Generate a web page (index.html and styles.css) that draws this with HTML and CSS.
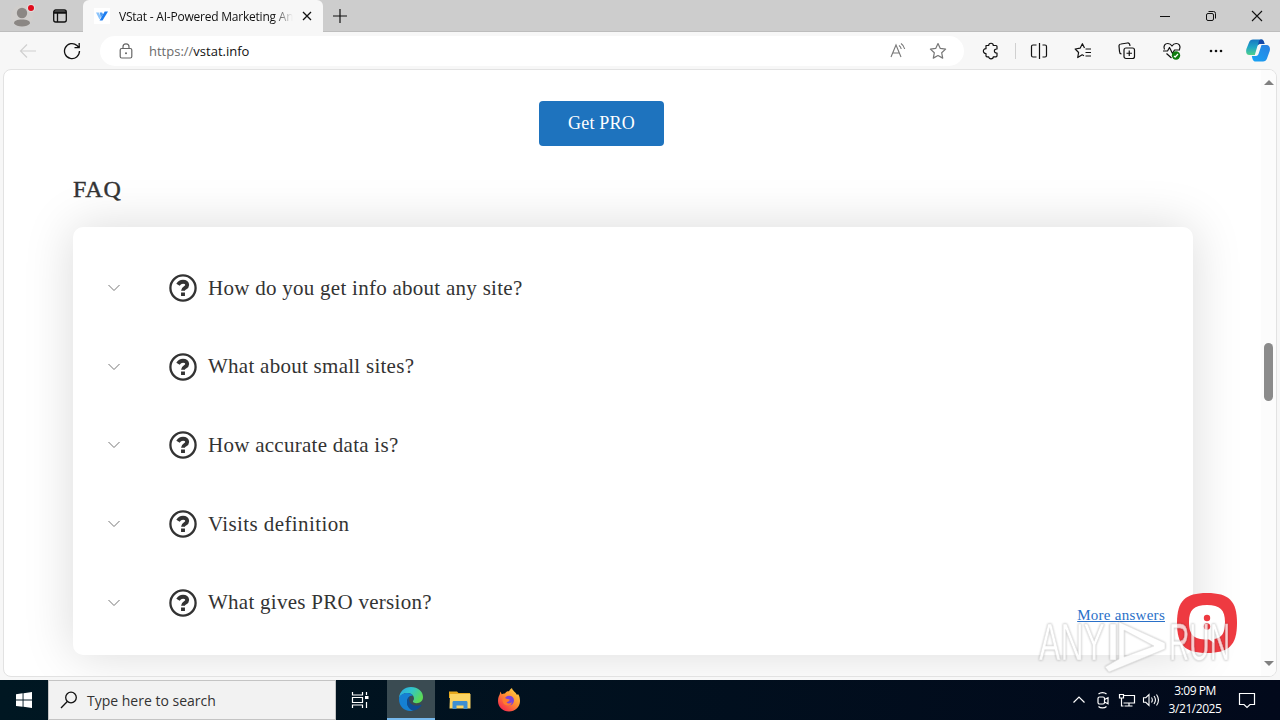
FILE: index.html
```html
<!DOCTYPE html>
<html lang="en">
<head>
    <meta charset="UTF-8">
    <meta name="viewport" content="width=device-width, initial-scale=1.0">
    <title>VStat - AI-Powered Marketing Analytics</title>
    <link rel="stylesheet" href="styles.css">
</head>
<body>
    <div class="screen">
        <!-- Tabs -->
        <div class="tabbar">
            <div class="profile">
                <svg width="32" height="32" viewBox="0 0 32 32">
                    <circle cx="16" cy="16" r="11" fill="#d0cecc"/>
                    <circle cx="16" cy="13" r="5.2" fill="#8b8784"/>
                    <path d="M8 23.5c0-3 3-4 8-4s8 1 8 4c-1.500 2-4.500 3-8 3s-6.500-1-8-3z" fill="#8b8784"/>
                    <circle cx="25" cy="8" r="4" fill="#e3dcdc"/>
                    <circle cx="25" cy="8" r="3" fill="#e00b1c"/>
                </svg>
            </div>
            <div class="tab-actions">
                <svg width="16" height="16" viewBox="0 0 16 16" fill="none" stroke="#111" stroke-width="1.300">
                    <rect x="1.700" y="2" width="12.600" height="12" rx="2"/>
                    <path d="M2 4h12M2 5h12M5.500 5v9"/>
                </svg>
            </div>
            <div class="tab">
                <div class="favicon">
                    <svg width="12" height="10" viewBox="0 0 12 10">
                        <path d="M0 1.500h2.800l2 4.500-1.300 2.500z" fill="#8cc4fb"/>
                        <path d="M3.600 1.500h2.500l1 2-2.200 3z" fill="#4c9cf5"/>
                        <path d="M8.700.5H12L6.500 9.500H3.600z" fill="#1d7df0"/>
                    </svg>
                </div>
                <div class="tab-title">VStat - AI-Powered Marketing An</div>
                <svg class="tab-close" width="10" height="10" viewBox="0 0 10 10" stroke="#111" stroke-width="1.300"><path d="M1 1l8 8M9 1L1 9"/></svg>
            </div>
            <svg class="new-tab" width="14" height="14" viewBox="0 0 14 14" stroke="#111" stroke-width="1.200"><path d="M7 0v14M0 7h14"/></svg>
            <div class="window-buttons">
                <div><svg width="12" height="12" viewBox="0 0 12 12" stroke="#111"><path d="M1 6.500h10"/></svg></div>
                <div><svg width="12" height="12" viewBox="0 0 12 12" fill="none" stroke="#111"><rect x="1.500" y="3.500" width="7" height="7" rx="1.500"/><path d="M3.500 1.500h5a2 2 0 0 1 2 2v5"/></svg></div>
                <div><svg width="12" height="12" viewBox="0 0 12 12" stroke="#111" stroke-width="1.100"><path d="M1 1l10 10M11 1L1 11"/></svg></div>
            </div>
        </div>

        <!-- Address bar -->
        <div class="toolbar">
            <div class="nav-button">
                <svg width="18" height="16" viewBox="0 0 18 16" fill="none" stroke="#d0d0d0" stroke-width="1.200"><path d="M17 8H1.500M8 1.500L1.500 8 8 14.500"/></svg>
            </div>
            <div class="nav-button">
                <svg width="18" height="18" viewBox="0 0 18 18" fill="none" stroke="#111" stroke-width="1.300"><path d="M16.500 9A7.500 7.500 0 1 1 14 3.500L16 5.500M16.200 1v4.700h-4.700"/></svg>
            </div>
            <div class="address">
                <svg class="lock" width="14" height="16" viewBox="0 0 14 16" fill="none" stroke="#666" stroke-width="1.200">
                    <rect x="1.200" y="5.500" width="11.600" height="9.500" rx="1.500"/>
                    <path d="M4 5.500V3.800a3 3 0 0 1 6 0v1.700"/>
                    <circle cx="7" cy="10.200" r="1" fill="#666" stroke="none"/>
                </svg>
                <div class="url"><span>https://</span>vstat.info</div>
                <div class="address-icon">
                    <svg width="18" height="18" viewBox="0 0 18 18" fill="none" stroke="#777" stroke-width="1.100">
                        <path d="M2 15L7 3l5 12M3.700 11h6.600M10 3.500c1.200.8 2 2 2.200 3.500M12 1.500c2 1.300 3.200 3.200 3.700 5.500"/>
                    </svg>
                </div>
                <div class="address-icon">
                    <svg width="18" height="18" viewBox="0 0 18 18" fill="none" stroke="#777" stroke-width="1.200" stroke-linejoin="round">
                        <path d="M9 1.500l2.300 4.900 5.300.7-3.900 3.700 1 5.300L9 13.500l-4.700 2.600 1-5.300L1.400 7.100l5.300-.7z"/>
                    </svg>
                </div>
            </div>
            <div class="tool tool-ext">
                <svg width="18" height="18" viewBox="0 0 18 18" fill="none" stroke="#111" stroke-width="1.200" stroke-linejoin="round">
                    <path d="M4 3.500h2.700c0-3 4.600-3 4.600 0H14a1 1 0 0 1 1 1V7c-3.500-.3-3.500 4.300 0 4v2.800a1 1 0 0 1-1 1h-2.700c0 2.700-4.600 2.700-4.600 0H5a1 1 0 0 1-1-1V11.500C.5 11.500.5 6.700 4 6.700z"/>
                </svg>
            </div>
            <div class="separator"></div>
            <div class="tool">
                <svg width="18" height="18" viewBox="0 0 18 18" fill="none" stroke="#111" stroke-width="1.200">
                    <path d="M9.500 1v16M6.500 3H3a1.500 1.500 0 0 0-1.500 1.500v9A1.500 1.500 0 0 0 3 15h3.500M12.500 3H15a1.500 1.500 0 0 1 1.500 1.500v9A1.500 1.500 0 0 1 15 15h-2.500"/>
                </svg>
            </div>
            <div class="tool">
                <svg width="18" height="18" viewBox="0 0 18 18" fill="none" stroke="#111" stroke-width="1.200" stroke-linejoin="round">
                    <path d="M11.500 7H17M11.500 10.500H17M11.500 14H17M10 13.700l-1.800-.9-4.500 2.700.9-5L1.200 7l4.900-.8 2.300-4.500L10.500 6"/>
                </svg>
            </div>
            <div class="tool">
                <svg width="18" height="18" viewBox="0 0 18 18" fill="none" stroke="#111" stroke-width="1.200">
                    <rect x="6" y="6" width="10.500" height="10.500" rx="2"/>
                    <path d="M11.250 8.500v5.500M8.500 11.250H14M3.500 12A2.500 2.500 0 0 1 1.500 9.500L1 4a2 2 0 0 1 2-2l6.500-1a2 2 0 0 1 2.300 2l.2 1"/>
                </svg>
            </div>
            <div class="tool">
                <svg width="20" height="18" viewBox="0 0 20 18" fill="none" stroke="#111" stroke-width="1.200" stroke-linejoin="round">
                    <path d="M2.500 7.500C1 4 3 1.500 5.800 1.500c2 0 3.300 1 4.200 2.500.9-1.500 2.200-2.500 4.200-2.500C17 1.500 19 4 17.500 7.500M1 9h4.500l2-3.500 3 6 2-3.500H18M4.500 11.500L9.500 16"/>
                    <circle cx="14" cy="13.500" r="4.200" fill="#107c10" stroke="none"/>
                    <path d="M12 14l1.200 1 2.800-3" stroke="#fff"/>
                </svg>
            </div>
            <div class="tool">
                <svg width="16" height="4" viewBox="0 0 16 4" fill="#111"><circle cx="3" cy="2" r="1.300"/><circle cx="8" cy="2" r="1.300"/><circle cx="13" cy="2" r="1.300"/></svg>
            </div>
            <div class="tool tool-copilot">
                <svg width="24" height="23" viewBox="0 0 24 23">
                    <defs>
                        <linearGradient id="copilotLeft" x1="0" y1="0" x2="0" y2="1">
                            <stop offset="0" stop-color="#1677c2"/>
                            <stop offset=".5" stop-color="#20a6c6"/>
                            <stop offset="1" stop-color="#4fd08b"/>
                        </linearGradient>
                        <linearGradient id="copilotRight" x1="1" y1="0" x2="0" y2="1">
                            <stop offset="0" stop-color="#2b7fe0"/>
                            <stop offset="1" stop-color="#16a5f5"/>
                        </linearGradient>
                    </defs>
                    <path d="M7 .5h8.500c1.700 0 2.500 1.500 3 4.500H14c-1.500 0-2.200 1-2.700 2.500L8.800 16H3.500C.2 16-.3 13 .4 10L3 3.500C3.700 1.500 5 .5 7 .5z" fill="url(#copilotLeft)"/>
                    <path d="M15.500.5c1.700 0 2.300 1.500 3 4.500H14c-1 0-1.700.5-2.200 1.500L13 2c.4-1 1-1.500 2.500-1.500z" fill="#1448a8"/>
                    <path d="M17 22.500H9.500C7 22.500 6.500 20 5.800 17H10c1.500 0 2.200-1 2.700-2.500L15.500 6h5c3 0 4 3 3.200 6L21 19.500c-.7 2-2 3-4 3z" fill="url(#copilotRight)"/>
                </svg>
            </div>
        </div>

        <!-- Page -->
        <div class="viewport">
            <div class="page">
                <button class="pro-button">Get PRO</button>
                <h2 class="faq-title">FAQ</h2>
                <div class="faq">
                    <div class="faq-item">
                        <svg class="chevron" width="12" height="8" viewBox="0 0 12 8"><path d="M.5 1L6 6.500 11.500 1"/></svg>
                        <svg class="question" width="28" height="28" viewBox="0 0 28 28"><circle cx="14" cy="14" r="12.600"/><path d="M9 10.700C10.300 8.500 12 7.700 14 7.700c2.500 0 4.200 1.300 4.200 3.300 0 3.200-4.200 2.700-4.200 5.700M14 18.500v3.500"/></svg>
                        <span>How do you get info about any site?</span>
                    </div>
                    <div class="faq-item">
                        <svg class="chevron" width="12" height="8" viewBox="0 0 12 8"><path d="M.5 1L6 6.500 11.500 1"/></svg>
                        <svg class="question" width="28" height="28" viewBox="0 0 28 28"><circle cx="14" cy="14" r="12.600"/><path d="M9 10.700C10.300 8.500 12 7.700 14 7.700c2.500 0 4.200 1.300 4.200 3.300 0 3.200-4.200 2.700-4.200 5.700M14 18.500v3.500"/></svg>
                        <span>What about small sites?</span>
                    </div>
                    <div class="faq-item">
                        <svg class="chevron" width="12" height="8" viewBox="0 0 12 8"><path d="M.5 1L6 6.500 11.500 1"/></svg>
                        <svg class="question" width="28" height="28" viewBox="0 0 28 28"><circle cx="14" cy="14" r="12.600"/><path d="M9 10.700C10.300 8.500 12 7.700 14 7.700c2.500 0 4.200 1.300 4.200 3.300 0 3.200-4.200 2.700-4.200 5.700M14 18.500v3.500"/></svg>
                        <span>How accurate data is?</span>
                    </div>
                    <div class="faq-item">
                        <svg class="chevron" width="12" height="8" viewBox="0 0 12 8"><path d="M.5 1L6 6.500 11.500 1"/></svg>
                        <svg class="question" width="28" height="28" viewBox="0 0 28 28"><circle cx="14" cy="14" r="12.600"/><path d="M9 10.700C10.300 8.500 12 7.700 14 7.700c2.500 0 4.200 1.300 4.200 3.300 0 3.200-4.200 2.700-4.200 5.700M14 18.500v3.500"/></svg>
                        <span class="wide">Visits definition</span>
                    </div>
                    <div class="faq-item">
                        <svg class="chevron" width="12" height="8" viewBox="0 0 12 8"><path d="M.5 1L6 6.500 11.500 1"/></svg>
                        <svg class="question" width="28" height="28" viewBox="0 0 28 28"><circle cx="14" cy="14" r="12.600"/><path d="M9 10.700C10.300 8.500 12 7.700 14 7.700c2.500 0 4.200 1.300 4.200 3.300 0 3.200-4.200 2.700-4.200 5.700M14 18.500v3.500"/></svg>
                        <span>What gives PRO version?</span>
                        <a class="more" href="#">More answers</a>
                    </div>
                </div>
            </div>
            <div class="scrollbar">
                <svg width="10" height="5" viewBox="0 0 10 5"><path d="M0 5l5-5 5 5z" fill="#808080"/></svg>
                <div class="thumb"></div>
                <svg width="10" height="5" viewBox="0 0 10 5"><path d="M0 0l5 5 5-5z" fill="#808080"/></svg>
            </div>
        </div>

        <!-- Chat button -->
        <svg class="chat" width="60" height="60" viewBox="0 0 60 60">
            <path d="M30 0C52 0 60 8 60 30S52 60 30 60 0 52 0 30 8 0 30 0z" fill="#ee3a41"/>
            <path d="M30 12c13 0 18 5 18 17 0 11-3 16-11 17v4l-5-3.500C17 47 12 42 12 29c0-12 5-17 18-17z" fill="#fff"/>
            <circle cx="30" cy="25" r="3.200" fill="#ee3a41"/>
            <circle cx="30" cy="33.500" r="3.200" fill="#ee3a41"/>
        </svg>

        <!-- Watermark -->
        <svg class="watermark" width="200" height="60" viewBox="0 0 200 60">
            <g class="mark-text">
                <text x="4" y="46" textLength="66" lengthAdjust="spacingAndGlyphs">ANY</text>
                <text x="134" y="46" textLength="61" lengthAdjust="spacingAndGlyphs">RUN</text>
            </g>
            <g class="mark-shape">
                <path d="M75 10h6v36h-6zM84 8l46 21v6L74 58l-4-5 14-8zM89 16v27l30-11z"/>
            </g>
        </svg>

        <!-- Taskbar -->
        <div class="taskbar">
            <div class="task start">
                <svg width="16" height="16" viewBox="0 0 16 16" fill="#fff"><path d="M0 2.200L6.600 1.300v6.300H0zM7.500 1.200L16 0v7.600H7.500zM0 8.500h6.600v6.300L0 13.900zM7.500 8.500H16V16l-8.500-1.200z"/></svg>
            </div>
            <div class="search">
                <svg width="18" height="18" viewBox="0 0 18 18" fill="none" stroke="#111" stroke-width="1.300"><circle cx="11" cy="6.500" r="5.300"/><path d="M7.300 10.500L1 17"/></svg>
                <span>Type here to search</span>
            </div>
            <div class="task task-view">
                <svg width="18" height="18" viewBox="0 0 18 18" fill="none" stroke="#fff" stroke-width="1.200"><path d="M1.500 1v3h10V1M1.500 17v-3h10v3M1.500 6.500h10v5h-10zM15.500 1v3M15.500 11v6"/><path d="M14 6.500h3.500" stroke-width="3"/></svg>
            </div>
            <div class="task active">
                <svg width="24" height="24" viewBox="0 0 24 24">
                    <defs>
                        <linearGradient id="edgeTop" x1="0" y1="0" x2="1" y2=".5">
                            <stop offset="0" stop-color="#2aa4e4"/>
                            <stop offset=".5" stop-color="#31c5cb"/>
                            <stop offset="1" stop-color="#5bd956"/>
                        </linearGradient>
                    </defs>
                    <path d="M0 11C.5 4.500 5.500 0 12 0c7 0 12 4.500 12 10 0 4-3 6.200-6.300 6.200-2.700 0-4-1-3.800-1.900.2-.5 1.100-1.200 1.100-2.800C15 8.500 12.500 6 8.500 6 4.500 6 1.500 8 0 11z" fill="url(#edgeTop)"/>
                    <path d="M0 12c0-3.500 3.500-6 8.500-6 2.500 0 4.500 1 5.500 2.500C9.500 8.500 8 12 8 15c0 4.500 3 8 7 8.600C6 25.500 0 20 0 12z" fill="#1580d3"/>
                    <path d="M11 9.200C9 10 8 12.500 8 15c0 4.500 3 8 7 8.600 3.300-.6 6-2.800 7.500-5.300.3-.5-.2-.8-.7-.5C16 20.500 9.500 17 10 11.500c.1-1 .5-1.800 1-2.300z" fill="#0d4d96"/>
                </svg>
            </div>
            <div class="task">
                <svg width="22" height="20" viewBox="0 0 22 20">
                    <path d="M0 1.500h8l1.500 1.500H21v5H0z" fill="#e8a91d"/>
                    <path d="M1 4h20.500v14.500H.5z" fill="#fcd462"/>
                    <path d="M3.500 19v-6.500c0-1 .5-1.500 1.500-1.500h12c1 0 1.500.5 1.500 1.500V19h-4v-3.500h-7V19z" fill="#3f8fd0"/>
                </svg>
            </div>
            <div class="task">
                <svg width="24" height="24" viewBox="0 0 24 24">
                    <defs>
                        <linearGradient id="fox" x1="1" y1="0" x2=".2" y2="1">
                            <stop offset="0" stop-color="#ffe14a"/>
                            <stop offset=".5" stop-color="#ff9130"/>
                            <stop offset="1" stop-color="#f4244f"/>
                        </linearGradient>
                    </defs>
                    <path d="M3.500 3.500l1.200 2.700C6 5.500 7 5.300 8 5.500 9 3.500 11 3 12 3.300 12.500 2 13.500 1 15 0c.2 2.500 4 4.200 5 7l1-1c1.500 2 2 4.500 2 7 0 6-5 10.500-11 10.500S1 19 1 13c0-3.500 1-5 1.500-6z" fill="url(#fox)"/>
                    <circle cx="12.200" cy="12.500" r="4.800" fill="#7a43d8"/>
                    <path d="M5.500 10.500c1.500-1 3-.7 4.500.5 1 .2 2.500 0 2.700 1-.5 1.500-2.200 1.500-3.200 2.500 1.500 1.500 4.500 1 5.500-.5-.5 3.500-4 4.500-7 2.800-1.800-1-2.800-3.300-2.500-6.300z" fill="#ff7b2e"/>
                </svg>
            </div>
            <div class="tray">
                <div><svg width="14" height="14" viewBox="0 0 14 14" fill="none" stroke="#fff" stroke-width="1.200"><path d="M1.500 9.500L7 4l5.500 5.500"/></svg></div>
                <div><svg width="14" height="18" viewBox="0 0 14 18" fill="none" stroke="#fff" stroke-width="1.200"><rect x="2" y="6" width="6.500" height="7" rx="1.500"/><path d="M8.500 8.500L12 6.700v6L8.500 11M2.500 3c2-1.800 6-1.800 8 0M2.500 15.500c2 1.800 6 1.800 8 0"/></svg></div>
                <div><svg width="18" height="16" viewBox="0 0 18 16" fill="none" stroke="#fff" stroke-width="1.200"><path d="M6 3.500h10.500v7.500H5.500M11 11v3M6.500 14h8M1.500 2.500h4v3.500h-4zM3.500 6v8h2"/></svg></div>
                <div><svg width="18" height="16" viewBox="0 0 18 16" fill="none" stroke="#fff" stroke-width="1.100"><path d="M1.500 5.700h2.300L7 2.500v11l-3.200-3.200H1.500zM9.500 5.500c1 1.500 1 3.500 0 5M12 4c1.800 2.500 1.800 5.500 0 8M14.500 2.500c2.500 3.500 2.500 7.500 0 11"/></svg></div>
            </div>
            <div class="clock">
                <div>3:09 PM</div>
                <div>3/21/2025</div>
            </div>
            <div class="notifications">
                <svg width="18" height="18" viewBox="0 0 18 18" fill="none" stroke="#fff" stroke-width="1.200"><path d="M1.500 2.500h15v11H12l-3 3-3-3H1.500z"/></svg>
            </div>
        </div>
    </div>
</body>
</html>
```

FILE: styles.css
```css
* {
    box-sizing: border-box;
}
body {
    margin: 0;
    overflow: hidden;
    font-family: "Open Sans", "Noto Sans", sans-serif;
}
svg {
    display: block;
    flex-shrink: 0;
}
.screen {
    position: relative;
    display: flex;
    flex-direction: column;
    width: 1280px;
    height: 720px;
    background: #f7f7f7;
}

/* tabs */
.tabbar {
    display: flex;
    align-items: center;
    height: 32px;
    background: #cdcdcd;
    border-bottom: 1px solid #bdbdbd;
}
.profile {
    width: 44px;
    padding-left: 6px;
}
.tab-actions {
    width: 39px;
    padding-left: 8px;
}
.tab {
    display: flex;
    align-items: center;
    width: 240px;
    height: 32px;
    margin-bottom: -1px;
    padding-left: 11px;
    background: #f7f7f7;
    border-radius: 6px 6px 0 0;
}
.favicon {
    display: flex;
    align-items: center;
    justify-content: center;
    width: 16px;
    height: 16px;
    background: #fff;
}
.tab-title {
    width: 174px;
    margin-left: 9px;
    font-size: 12px;
    letter-spacing: -0.22px;
    color: #111;
    white-space: nowrap;
    overflow: hidden;
    -webkit-mask-image: linear-gradient(to right, #000 154px, transparent 174px);
    mask-image: linear-gradient(to right, #000 154px, transparent 174px);
}
.tab-close {
    margin-left: 9px;
}
.new-tab {
    margin-left: 10px;
}
.window-buttons {
    display: flex;
    margin-left: auto;
}
.window-buttons div {
    display: flex;
    justify-content: center;
    width: 46px;
}

/* address bar */
.toolbar {
    display: flex;
    align-items: center;
    height: 37px;
    padding-left: 6px;
}
.nav-button {
    display: flex;
    justify-content: center;
    width: 44px;
}
.address {
    display: flex;
    align-items: center;
    width: 864px;
    height: 30px;
    margin-left: 6px;
    padding: 0 6px 0 19px;
    background: #fff;
    border-radius: 15px;
}
.url {
    flex: 1;
    margin-left: 16px;
    font-size: 13px;
    color: #111;
}
.url span {
    color: #6b6b6b;
}
.address-icon {
    display: flex;
    justify-content: center;
    width: 40px;
}
.tool {
    display: flex;
    justify-content: center;
    width: 44.200px;
}
.tool-ext {
    width: 48px;
    margin-left: 3px;
}
.separator {
    width: 1px;
    height: 16px;
    margin-right: 1px;
    background: #d0d0d0;
}
.tool-copilot {
    width: 40px;
}

/* page */
.viewport {
    display: flex;
    width: 1274px;
    height: 608px;
    margin: 0 0 3px 3px;
    background: #fff;
    border: 1px solid #e2e2e2;
    border-radius: 8px;
    overflow: hidden;
}
.page {
    flex: 1;
    padding: 31px 0 0 69px;
    font-family: "Liberation Serif", "Times New Roman", serif;
    color: #333;
    overflow: hidden;
}
.pro-button {
    display: block;
    width: 125px;
    height: 45px;
    margin-left: 466px;
    font-family: inherit;
    font-size: 18px;
    letter-spacing: 0.2px;
    color: #fff;
    background: #1e73be;
    border: none;
    border-radius: 4px;
}
.faq-title {
    margin: 29px 0 24px;
    font-size: 24px;
    line-height: 28px;
    font-weight: 400;
    letter-spacing: 0.8px;
    -webkit-text-stroke: 0.4px #333;
}
.faq {
    width: 1120px;
    height: 428px;
    padding-top: 22px;
    background: #fff;
    border-radius: 10px;
    box-shadow: 0 0 50px rgba(0, 0, 0, 0.15);
}
.faq-item {
    display: flex;
    align-items: center;
    height: 78.600px;
    padding-left: 35px;
    font-size: 21px;
    letter-spacing: 0.27px;
}
.wide {
    letter-spacing: 0.4px;
}
.chevron {
    margin-right: 49px;
    fill: none;
    stroke: #777;
}
.question {
    margin-right: 11px;
    fill: none;
    stroke: #333;
    stroke-width: 2.300;
}
.question path {
    stroke-width: 3.900;
}
.more {
    margin: 26px 28px 0 auto;
    font-size: 15px;
    color: #2a70c8;
}
.scrollbar {
    display: flex;
    flex-direction: column;
    align-items: center;
    width: 15px;
    padding: 10px 0 9px;
    background: #fcfcfc;
}
.thumb {
    width: 9px;
    height: 58px;
    margin: 258px 0 260px;
    border-radius: 5px;
    background: #8b8b8b;
}

/* chat button and watermark lie over the page */
.chat {
    position: absolute;
    left: 1177px;
    top: 593px;
}
.watermark {
    position: absolute;
    left: 1035px;
    top: 614px;
    opacity: 0.75;
    filter: drop-shadow(0 0 1px rgba(0, 0, 0, 0.35));
}
.mark-text {
    font-family: "Liberation Sans", Arial, sans-serif;
    font-size: 51px;
    fill: #fff;
    stroke: #ddd;
    stroke-width: 0.7px;
}
.mark-shape {
    fill: #fff;
    fill-rule: evenodd;
    stroke: #ddd;
    stroke-width: 0.7px;
}

/* taskbar */
.taskbar {
    display: flex;
    height: 40px;
    color: #fff;
    background: linear-gradient(to right, #001722, #02091b);
}
.task {
    display: flex;
    align-items: center;
    justify-content: center;
    width: 49px;
}
.task.start {
    width: 48px;
}
.task.task-view {
    width: 51px;
    padding-right: 3px;
}
.search {
    display: flex;
    align-items: center;
    width: 288px;
    padding-left: 11px;
    background: #f2f2f2;
    border: 1px solid #c4c4c4;
}
.search span {
    margin-left: 9px;
    font-size: 14px;
    color: #333;
}
.task.active {
    width: 48px;
    background: #3a4b52;
    border-bottom: 2px solid #76b9ed;
}
.tray {
    display: flex;
    align-items: center;
    margin-left: auto;
}
.tray div {
    display: flex;
    justify-content: center;
    width: 24px;
}
.clock {
    width: 64px;
    padding-top: 2px;
    font-size: 12px;
    line-height: 18px;
    letter-spacing: -0.45px;
    text-align: center;
}
.notifications {
    display: flex;
    align-items: center;
    justify-content: center;
    width: 40px;
    margin-right: 13px;
}
```
